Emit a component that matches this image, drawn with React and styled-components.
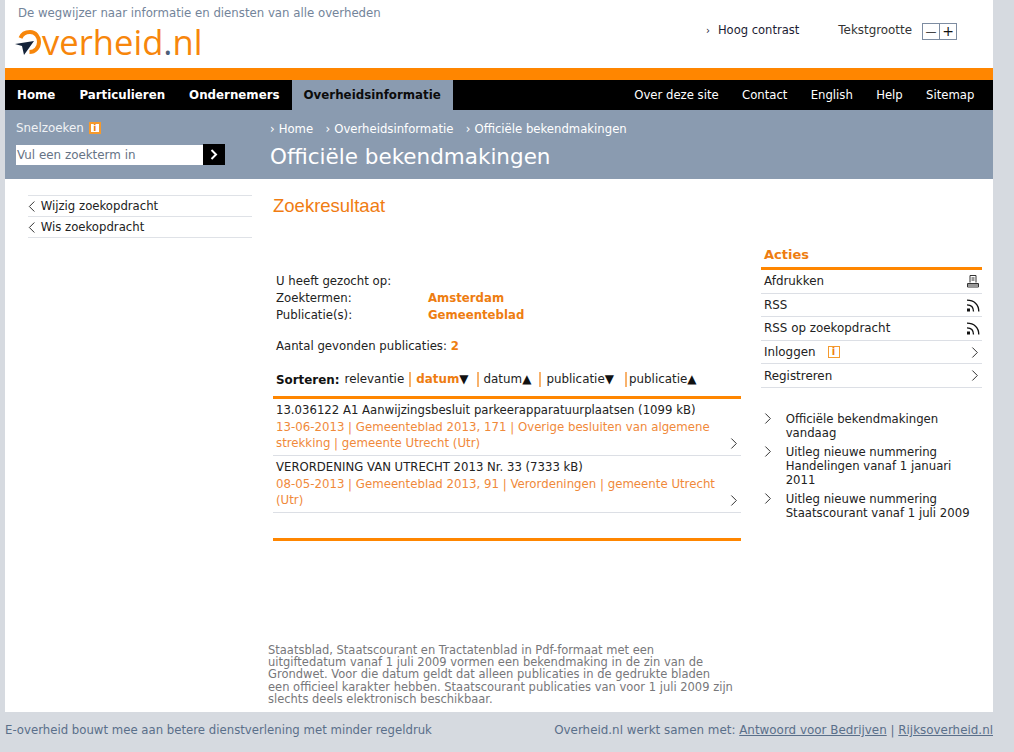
import React from "react";
import styled, { createGlobalStyle } from "styled-components";

const GlobalStyle = createGlobalStyle`
  html, body {
    margin: 0;
    padding: 0;
    background: #d6dae0;
  }
  body {
    font-family: "DejaVu Sans", Verdana, sans-serif;
    font-size: 12px;
    color: #222;
  }
`;

const Page = styled.div`
  width: 1014px;
  height: 752px;
  overflow: hidden;
  display: flex;
  flex-direction: column;
`;

const Sheet = styled.div`
  margin-left: 5px;
  width: 988px;
  height: 712px;
  flex: none;
  background: #fff;
  display: flex;
  flex-direction: column;
`;

const Header = styled.header`
  height: 68px;
  display: flex;
  justify-content: space-between;
`;

const Brand = styled.div`
  padding: 6px 0 0 13px;
`;

const Tagline = styled.div`
  font-size: 11.76px;
  line-height: 15px;
  color: #73849a;
`;

const Logo = styled.div`
  display: flex;
  align-items: flex-start;
  margin: 2px 0 0 -3px;
  height: 40px;
`;

const LogoText = styled.span`
  font-family: "Open Sans", "Liberation Sans", sans-serif;
  font-size: 34.6px;
  font-weight: 500;
  line-height: 38px;
  color: #f7860b;
  margin-left: -1px;
`;

const LogoDot = styled.span`
  color: #4d6079;
`;

const Tools = styled.div`
  display: flex;
  align-items: flex-start;
  padding: 22px 36px 0 0;
`;

const ContrastLink = styled.span`
  line-height: 16px;
  margin-right: 39px;
  font-size: 11.55px;
  color: #1c1c33;
`;

const Caret = styled.span`
  margin-right: 8px;
  font-size: 10px;
`;

const SizeLabel = styled.span`
  line-height: 16px;
  font-size: 11.9px;
  color: #333;
  margin-right: 10px;
`;

const SizeBox = styled.div`
  display: flex;
  height: 15px;
  border: 1px solid #7d8ca1;
  margin-top: 1px;
`;

const SizeButton = styled.span`
  width: 16px;
  display: flex;
  align-items: center;
  justify-content: center;
  font-size: ${(p) => p.$size}px;
  line-height: 15px;
  color: #111;
  & + & {
    border-left: 1px solid #7d8ca1;
  }
`;

const OrangeBar = styled.div`
  height: 12px;
  background: #ff8600;
`;

const Nav = styled.nav`
  height: 30px;
  background: #000;
  display: flex;
  justify-content: space-between;
  padding-right: 7px;
`;

const NavGroup = styled.div`
  display: flex;
`;

const MainLink = styled.a`
  display: flex;
  align-items: center;
  padding: 0 12px;
  font-weight: 700;
  font-size: 11.83px;
  color: ${(p) => (p.$active ? "#0c0c0c" : "#fff")};
  background: ${(p) => (p.$active ? "#8a9bb0" : "transparent")};
`;

const MetaLink = styled.a`
  display: flex;
  align-items: center;
  padding: 0 11.65px;
  font-size: 11.68px;
  color: #fff;
`;

const Band = styled.div`
  height: 69px;
  background: #8a9bb0;
  display: flex;
`;

const QuickSearch = styled.div`
  width: 265px;
  padding: 11px 0 0 11px;
  box-sizing: border-box;
`;

const QuickLabel = styled.div`
  display: flex;
  align-items: center;
  gap: 5px;
  color: #f0f2f5;
  font-size: 11.9px;
  line-height: 14px;
`;

const InfoIcon = styled.span`
  width: 12px;
  height: 12px;
  box-sizing: border-box;
  border: ${(p) => (p.$heavy ? 2 : 1)}px solid #f59a2e;
  background: #fff;
  color: #ee7d11;
  font-size: ${(p) => (p.$heavy ? 9 : 10)}px;
  font-weight: 700;
  line-height: ${(p) => (p.$heavy ? 8 : 10)}px;
  text-align: center;
  display: inline-block;
`;

const SearchRow = styled.div`
  display: flex;
  margin-top: 10px;
`;

const SearchField = styled.div`
  width: 187px;
  height: 20px;
  background: #fff;
  color: #667385;
  font-size: 11.9px;
  line-height: 20px;
  padding-left: 1px;
  box-sizing: border-box;
`;

const SearchButton = styled.div`
  width: 22px;
  height: 21px;
  margin-top: -1px;
  background: #000;
  display: flex;
  align-items: center;
  justify-content: center;
`;

const BandMain = styled.div`
  padding-top: 12px;
`;

const Crumbs = styled.div`
  display: flex;
  gap: 12.4px;
  color: #fff;
  font-size: 11.68px;
  line-height: 15px;
`;

const Crumb = styled.span`
  &::before {
    content: "›";
    margin-right: 4px;
  }
`;

const PageTitle = styled.h1`
  margin: 6px 0 0;
  font-weight: 400;
  font-size: 21.5px;
  line-height: 27px;
  color: #fff;
`;

const Content = styled.div`
  flex: 1;
  display: grid;
  grid-template-columns: 245px 468px 241px;
  padding-left: 23px;
`;

const LeftColumn = styled.div`
  padding-top: 16px;
  width: 224px;
`;

const BackItem = styled.a`
  display: flex;
  align-items: center;
  gap: 5px;
  height: 20px;
  border-top: 1px solid #dfe2e7;
  color: #222;
  font-size: 11.7px;
  &:last-child {
    border-bottom: 1px solid #dfe2e7;
  }
`;

const MiddleColumn = styled.div`
  display: flex;
  flex-direction: column;
  padding-top: 16px;
`;

const ResultHeading = styled.h2`
  margin: 0;
  font-family: "Liberation Sans", Arial, sans-serif;
  font-weight: 400;
  font-size: 18.5px;
  line-height: 22px;
  color: #f07c12;
  padding-bottom: 56px;
`;

const QueryBlock = styled.div`
  padding-left: 3px;
  font-size: 11.72px;
  line-height: 17px;
`;

const QueryRow = styled.div`
  display: flex;
`;

const QueryKey = styled.span`
  width: 152px;
`;

const Strong = styled.strong`
  color: #ee7d11;
  font-weight: 700;
`;

const CountLine = styled.div`
  margin-top: 14px;
`;

const SortBar = styled.div`
  display: flex;
  align-items: center;
  height: 15px;
  margin-top: 17px;
  padding-left: 3px;
  font-size: 11.9px;
  color: #222;
  padding-bottom: 9px;
  border-bottom: 3px solid #ff8600;
  box-sizing: content-box;
`;

const SortLabel = styled.strong`
  color: #111;
  margin-right: 5px;
`;

const SortItem = styled.span`
  padding: 0 ${(p) => p.$right ?? 7}px 0 ${(p) => p.$left ?? 5}px;
  border-left: ${(p) => (p.$plain ? "none" : "2px solid #f8b26c")};
  color: ${(p) => (p.$active ? "#ee7d11" : "#222")};
  font-weight: ${(p) => (p.$active ? 700 : 400)};
  line-height: 15px;
  white-space: nowrap;
`;

const Arrow = styled.span`
  color: #111;
  font-size: 12px;
  font-weight: 400;
  padding-right: 1px;
`;

const Result = styled.article`
  position: relative;
  padding: 2px 3px 4px;
  border-bottom: 1px solid #dcdfe5;
`;

const ResultTitle = styled.div`
  line-height: 19px;
  font-size: 11.7px;
  color: #222;
`;

const ResultMeta = styled.div`
  line-height: 15.6px;
  font-size: 11.78px;
  color: #f0893a;
  padding-right: 10px;
`;

const ResultArrow = styled.span`
  position: absolute;
  right: 3px;
  bottom: 6px;
  display: flex;
`;

const ClosingRule = styled.div`
  height: 3px;
  background: #ff8600;
  margin-top: 25px;
`;

const Disclaimer = styled.p`
  margin: auto 0 0;
  padding-bottom: 7px;
  margin-left: -5px;
  width: 480px;
  font-size: 11.5px;
  line-height: 12.2px;
  color: #77777a;
`;

const RightColumn = styled.aside`
  padding-top: 66px;
  margin-left: 20px;
  width: 221px;
`;

const ActionsHeading = styled.h3`
  margin: 0;
  padding: 1px 0 3px 3px;
  font-size: 13px;
  line-height: 18px;
  font-weight: 700;
  color: #ee7d11;
  border-bottom: 3px solid #ff8600;
`;

const ActionRow = styled.a`
  display: flex;
  align-items: center;
  justify-content: space-between;
  padding: 0 3px;
  box-sizing: border-box;
  height: 23.6px;
  border-bottom: 1px solid #dcdfe5;
  font-size: 11.9px;
  color: #222;
`;

const ActionLabel = styled.span`
  display: flex;
  align-items: center;
  gap: 12px;
`;

const RssSvg = styled.svg`
  margin-right: -1px;
`;

const RelatedList = styled.ul`
  list-style: none;
  margin: 24px 0 0;
  padding: 0;
`;

const RelatedItem = styled.li`
  display: flex;
  gap: 14px;
  font-size: 11.7px;
  line-height: 14px;
  margin-bottom: 5px;
  color: #222;
  span {
    max-width: 187px;
  }
  svg {
    margin: 1px 0 0 3px;
    flex: none;
  }
`;

const Footer = styled.footer`
  height: 40px;
  box-sizing: border-box;
  flex: none;
  display: flex;
  justify-content: space-between;
  padding: 10px 21px 0 5px;
  font-size: 11.72px;
  line-height: 16px;
  color: #5a6f8a;
`;

const FooterRight = styled.span`
  font-size: 11.92px;
`;

const FooterLink = styled.a`
  text-decoration: underline;
`;

const Chevron = ({ dir = "right", size = 11, color = "#333" }) => (
  <svg width={size * 0.7} height={size} viewBox="0 0 7 11" fill="none">
    <path
      d={dir === "right" ? "M1 .5 6 5.5 1 10.5" : "M6 .5 1 5.5 6 10.5"}
      stroke={color}
      strokeWidth="1"
    />
  </svg>
);

const RssIcon = () => (
  <RssSvg width="14" height="14" viewBox="0 0 14 14" fill="none">
    <rect x="1" y="10.5" width="3" height="3" fill="#111" />
    <path d="M1 6.8C5 6.8 7.5 9.3 7.5 13.5M1 2.2C8 2.2 12.8 6.5 12.8 13.5" stroke="#111" strokeWidth="1.3" />
  </RssSvg>
);

const PrintIcon = () => (
  <svg width="12" height="13" viewBox="0 0 12 13" fill="none" stroke="#333" strokeWidth="1">
    <path d="M3 7.5V.5H9V7.5" />
    <path d="M4.5 3H7.5M4.5 5H7.5" />
    <path d="M.5 8.5H11.5V12H.5Z" />
    <path d="M.5 10H11.5" />
  </svg>
);

const LogoMark = () => (
  <svg width="28" height="34" viewBox="0 0 28 34" fill="none">
    <path d="M5.5 15C7 11 10 9 15 9 20.5 9 24 13.5 24 19 24 24.5 20 29 14.5 29" stroke="#f7860b" strokeWidth="4" />
    <path d="M0 21 19 18 9 32 7 23Z" fill="#14233a" />
  </svg>
);

const SearchArrow = () => (
  <svg width="8" height="11" viewBox="0 0 8 11" fill="none">
    <path d="M1.5 1 6 5.5 1.5 10" stroke="#fff" strokeWidth="2" />
  </svg>
);

export default function App() {
  return (
    <>
      <GlobalStyle />
      <Page>
        <Sheet>
          <Header>
            <Brand>
              <Tagline>De wegwijzer naar informatie en diensten van alle overheden</Tagline>
              <Logo>
                <LogoMark />
                <LogoText>
                  verheid<LogoDot>.</LogoDot>nl
                </LogoText>
              </Logo>
            </Brand>
            <Tools>
              <ContrastLink>
                <Caret>›</Caret>Hoog contrast
              </ContrastLink>
              <SizeLabel>Tekstgrootte</SizeLabel>
              <SizeBox>
                <SizeButton $size={11}>—</SizeButton>
                <SizeButton $size={14}>+</SizeButton>
              </SizeBox>
            </Tools>
          </Header>
          <OrangeBar />
          <Nav>
            <NavGroup>
              <MainLink>Home</MainLink>
              <MainLink>Particulieren</MainLink>
              <MainLink>Ondernemers</MainLink>
              <MainLink $active>Overheidsinformatie</MainLink>
            </NavGroup>
            <NavGroup>
              <MetaLink>Over deze site</MetaLink>
              <MetaLink>Contact</MetaLink>
              <MetaLink>English</MetaLink>
              <MetaLink>Help</MetaLink>
              <MetaLink>Sitemap</MetaLink>
            </NavGroup>
          </Nav>
          <Band>
            <QuickSearch>
              <QuickLabel>
                Snelzoeken <InfoIcon $heavy>i</InfoIcon>
              </QuickLabel>
              <SearchRow>
                <SearchField>Vul een zoekterm in</SearchField>
                <SearchButton>
                  <SearchArrow />
                </SearchButton>
              </SearchRow>
            </QuickSearch>
            <BandMain>
              <Crumbs>
                <Crumb>Home</Crumb>
                <Crumb>Overheidsinformatie</Crumb>
                <Crumb>Officiële bekendmakingen</Crumb>
              </Crumbs>
              <PageTitle>Officiële bekendmakingen</PageTitle>
            </BandMain>
          </Band>
          <Content>
            <LeftColumn>
              <BackItem>
                <Chevron dir="left" /> Wijzig zoekopdracht
              </BackItem>
              <BackItem>
                <Chevron dir="left" /> Wis zoekopdracht
              </BackItem>
            </LeftColumn>
            <MiddleColumn>
              <ResultHeading>Zoekresultaat</ResultHeading>
              <QueryBlock>
                <div>U heeft gezocht op:</div>
                <QueryRow>
                  <QueryKey>Zoektermen:</QueryKey>
                  <Strong>Amsterdam</Strong>
                </QueryRow>
                <QueryRow>
                  <QueryKey>Publicatie(s):</QueryKey>
                  <Strong>Gemeenteblad</Strong>
                </QueryRow>
                <CountLine>
                  Aantal gevonden publicaties: <Strong>2</Strong>
                </CountLine>
              </QueryBlock>
              <SortBar>
                <SortLabel>Sorteren:</SortLabel>
                <SortItem $plain $left={0} $right={5}>relevantie</SortItem>
                <SortItem $active>datum<Arrow>▼</Arrow></SortItem>
                <SortItem>datum<Arrow>▲</Arrow></SortItem>
                <SortItem $right={10}>publicatie<Arrow>▼</Arrow></SortItem>
                <SortItem $left={2}>publicatie<Arrow>▲</Arrow></SortItem>
              </SortBar>
              <Result>
                <ResultTitle>13.036122 A1 Aanwijzingsbesluit parkeerapparatuurplaatsen (1099 kB)</ResultTitle>
                <ResultMeta>13-06-2013 | Gemeenteblad 2013, 171 | Overige besluiten van algemene strekking | gemeente Utrecht (Utr)</ResultMeta>
                <ResultArrow>
                  <Chevron />
                </ResultArrow>
              </Result>
              <Result>
                <ResultTitle>VERORDENING VAN UTRECHT 2013 Nr. 33 (7333 kB)</ResultTitle>
                <ResultMeta>08-05-2013 | Gemeenteblad 2013, 91 | Verordeningen | gemeente Utrecht (Utr)</ResultMeta>
                <ResultArrow>
                  <Chevron />
                </ResultArrow>
              </Result>
              <ClosingRule />
              <Disclaimer>
                Staatsblad, Staatscourant en Tractatenblad in Pdf-formaat met een<br />
                uitgiftedatum vanaf 1 juli 2009 vormen een bekendmaking in de zin van de<br />
                Grondwet. Voor die datum geldt dat alleen publicaties in de gedrukte bladen<br />
                een officieel karakter hebben. Staatscourant publicaties van voor 1 juli 2009 zijn<br />
                slechts deels elektronisch beschikbaar.
              </Disclaimer>
            </MiddleColumn>
            <RightColumn>
              <ActionsHeading>Acties</ActionsHeading>
              <ActionRow>
                Afdrukken <PrintIcon />
              </ActionRow>
              <ActionRow>
                RSS <RssIcon />
              </ActionRow>
              <ActionRow>
                RSS op zoekopdracht <RssIcon />
              </ActionRow>
              <ActionRow>
                <ActionLabel>
                  Inloggen <InfoIcon>i</InfoIcon>
                </ActionLabel>
                <Chevron />
              </ActionRow>
              <ActionRow>
                Registreren <Chevron />
              </ActionRow>
              <RelatedList>
                <RelatedItem>
                  <Chevron />
                  <span>Officiële bekendmakingen vandaag</span>
                </RelatedItem>
                <RelatedItem>
                  <Chevron />
                  <span>Uitleg nieuwe nummering Handelingen vanaf 1 januari 2011</span>
                </RelatedItem>
                <RelatedItem>
                  <Chevron />
                  <span>Uitleg nieuwe nummering Staatscourant vanaf 1 juli 2009</span>
                </RelatedItem>
              </RelatedList>
            </RightColumn>
          </Content>
        </Sheet>
        <Footer>
          <span>E-overheid bouwt mee aan betere dienstverlening met minder regeldruk</span>
          <FooterRight>
            Overheid.nl werkt samen met: <FooterLink>Antwoord voor Bedrijven</FooterLink> | <FooterLink>Rijksoverheid.nl</FooterLink>
          </FooterRight>
        </Footer>
      </Page>
    </>
  );
}
